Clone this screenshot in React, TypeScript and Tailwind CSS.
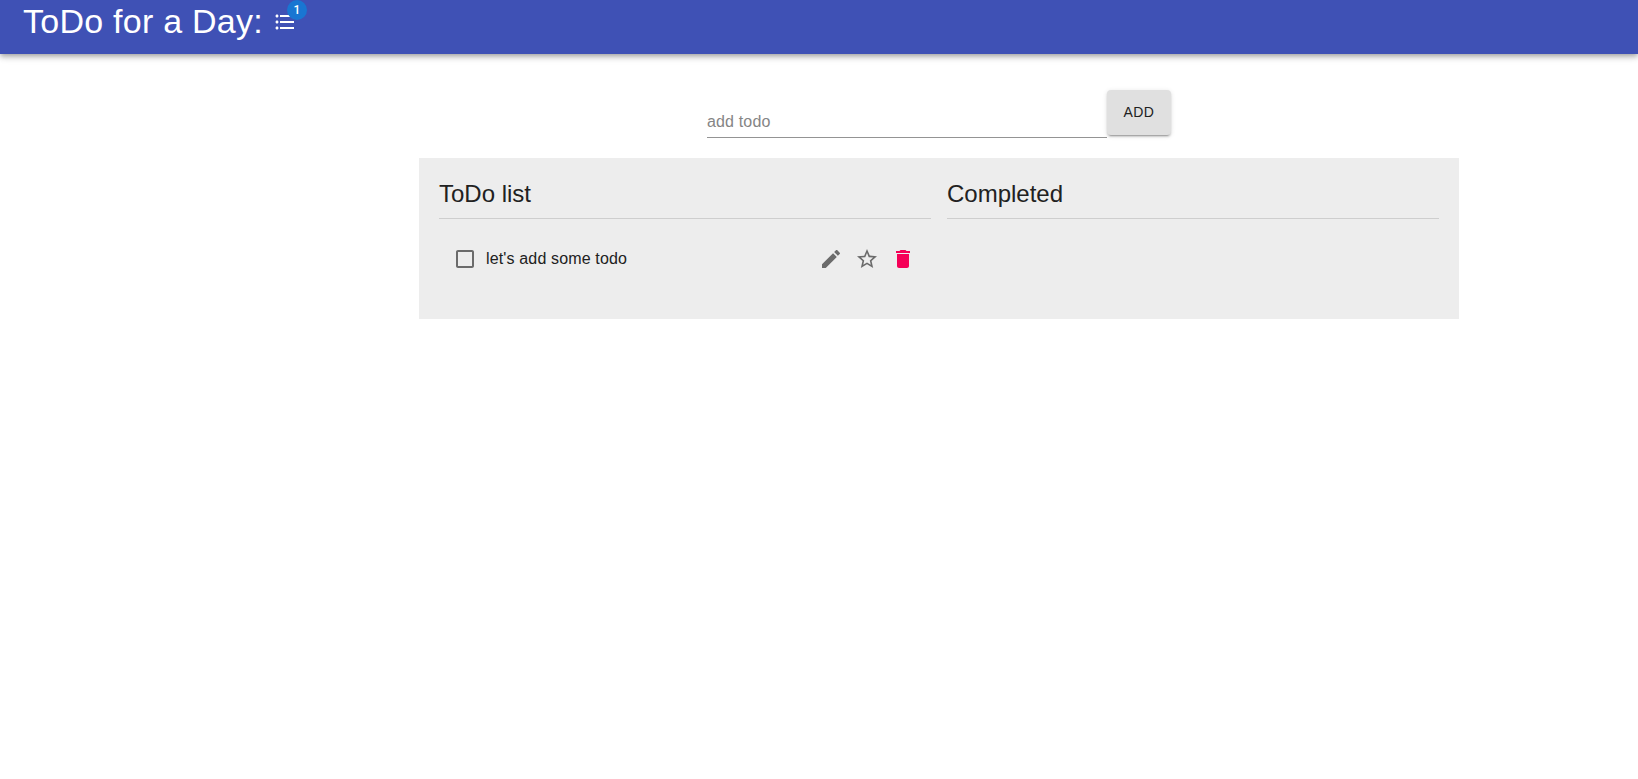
import React, { useState } from "react";

function Icon({ d, className }: { d: string; className?: string }) {
  return (
    <svg viewBox="0 0 24 24" className={`block size-6 shrink-0 fill-current ${className ?? ""}`} aria-hidden="true">
      <path d={d} />
    </svg>
  );
}

const icons = {
  list: "M4 10.5c-.83 0-1.5.67-1.5 1.5s.67 1.5 1.5 1.5 1.5-.67 1.5-1.5-.67-1.5-1.5-1.5zm0-6c-.83 0-1.5.67-1.5 1.5S3.170 7.500 4 7.500 5.500 6.830 5.500 6 4.830 4.500 4 4.500zm0 12c-.83 0-1.5.68-1.5 1.5s.68 1.5 1.5 1.5 1.5-.68 1.5-1.5-.67-1.5-1.5-1.5zM7 19h14v-2H7v2zm0-6h14v-2H7v2zm0-8v2h14V5H7z",
  unchecked: "M19 5v14H5V5h14m0-2H5c-1.100 0-2 .9-2 2v14c0 1.100.9 2 2 2h14c1.100 0 2-.9 2-2V5c0-1.100-.9-2-2-2z",
  edit: "M3 17.250V21h3.750L17.810 9.940l-3.750-3.750L3 17.250zM20.710 7.040c.39-.39.39-1.020 0-1.410l-2.340-2.340c-.39-.39-1.020-.39-1.410 0l-1.830 1.830 3.750 3.750 1.830-1.830z",
  star: "M22 9.240l-7.190-.62L12 2 9.190 8.630 2 9.240l5.460 4.730L5.820 21 12 17.270 18.180 21l-1.630-7.030L22 9.240zM12 15.400l-3.760 2.270 1-4.280-3.320-2.880 4.380-.38L12 6.100l1.710 4.040 4.380.38-3.320 2.880 1 4.280L12 15.400z",
  trash: "M6 19c0 1.100.9 2 2 2h8c1.100 0 2-.9 2-2V7H6v12zM19 4h-3.500l-1-1h-5l-1 1H5v2h14V4z",
};

function Column({ title, children }: { title: string; children?: React.ReactNode }) {
  return (
    <section className="flex-1">
      <h2 className="border-b border-[#cecece] pt-px pb-2.5 text-2xl leading-[29px]">{title}</h2>
      {children}
    </section>
  );
}

export default function App() {
  const [value, setValue] = useState("");
  return (
    <div className="min-h-screen bg-white font-['Liberation_Sans',Arial,sans-serif] text-[#212121]">
      <header className="flex h-[54px] items-start bg-[#3f51b5] pl-[23px] text-white shadow-[0_2px_4px_-1px_rgba(0,0,0,0.2),0_4px_5px_0_rgba(0,0,0,0.14),0_1px_10px_0_rgba(0,0,0,0.12)]">
        <h1 className="w-[250px] text-[34px] leading-[42px] tracking-[0.00735em] whitespace-nowrap">ToDo for a Day:</h1>
        <span className="relative mt-2.5">
          <Icon d={icons.list} />
          <span className="absolute -top-2.5 -right-2.5 flex size-5 items-center justify-center rounded-full bg-[#1976d2] font-[Roboto,sans-serif] text-xs leading-none font-medium">
            1
          </span>
        </span>
      </header>
      <main className="ml-[419px] w-[1040px] pt-9">
        <form className="flex h-12 items-start justify-center" onSubmit={(e) => e.preventDefault()}>
          <input
            value={value}
            onChange={(e) => setValue(e.target.value)}
            placeholder="add todo"
            className="h-12 w-[400px] border-b border-[#949494] pt-[17px] text-base tracking-[0.00938em] outline-none placeholder:text-[#858585]"
          />
          <button className="h-[45px] w-16 rounded bg-[#e0e0e0] pb-0.5 text-sm tracking-[0.02857em] shadow-[0_3px_1px_-2px_rgba(0,0,0,0.2),0_2px_2px_0_rgba(0,0,0,0.14),0_1px_5px_0_rgba(0,0,0,0.12)]">
            ADD
          </button>
        </form>
        <div className="mt-5 flex h-[161px] gap-4 bg-[#ededed] px-5 pt-5">
          <Column title="ToDo list">
            <div className="mt-7 flex h-6 items-center px-[14px] pr-4 text-[#6b6b6b]">
              <Icon d={icons.unchecked} />
              <span className="ml-[9px] flex-1 text-base tracking-[0.00938em] text-[#212121]">let's add some todo</span>
              <div className="flex gap-3">
                <Icon d={icons.edit} />
                <Icon d={icons.star} />
                <Icon d={icons.trash} className="text-[#f50057]" />
              </div>
            </div>
          </Column>
          <Column title="Completed" />
        </div>
      </main>
    </div>
  );
}
